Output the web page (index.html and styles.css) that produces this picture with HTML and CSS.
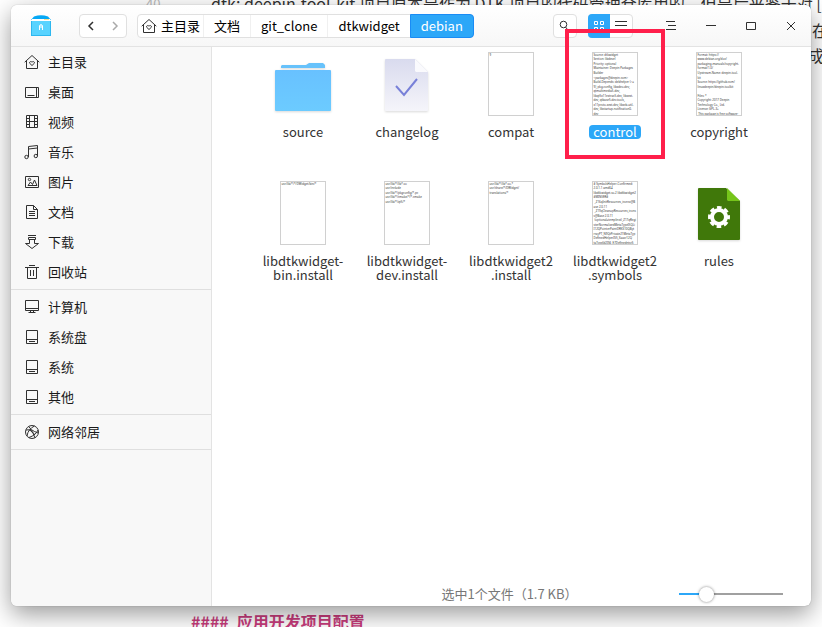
FILE: index.html
```html
<!DOCTYPE html>
<html lang="zh-CN">
<head>
<meta charset="utf-8">
<title>debian</title>
<link rel="stylesheet" href="styles.css">
</head>
<body>
<svg class="defs" aria-hidden="true">
  <symbol id="home" viewBox="0 0 16 16"><path d="M.7 8.2 8 1.500l7.300 6.700M2.500 7v7.500h11V7M8 11.500 5.700 9.300C5 8 6.700 6.800 8 8.200 9.300 6.800 11 8 10.300 9.300z"/></symbol>
  <symbol id="disk" viewBox="0 0 16 16"><path d="M2.500 1.500h11v13h-11zM2.500 10.500h11M5 12.500h6"/></symbol>
</svg>

<div class="backdrop" aria-hidden="true">
  <span class="line-number">40</span>
  <p class="doc-line first"><span class="dash">-</span>dtk: deepin-tool-kit 项目原本是作为 DTK 项目的代码管理仓库用的，但是后来鉴于对 [</p>
  <p class="doc-line second">在</p>
  <p class="doc-line third">成</p>
  <p class="doc-heading"><span>####</span> <span>应用开发项目配置</span></p>
</div>

<div class="window">
  <header class="titlebar">
    <svg class="app-icon" viewBox="0 0 20 22"><path fill="#06a8f5" d="M0 5 3 1.500Q10-1 17 1.500L20 5z"/><path fill="#fff" d="M1 4h18v4H1z"/><path fill="#ffe08a" d="M13 4h5v1h-5z"/><path fill="#58d3ff" d="M0 6h20v15H0z"/><path fill="#2db7ef" d="M0 6h1v15H0zM19 6h1v15h-1zM0 20h20v1H0z"/><path fill="none" stroke="#fff" d="M8.500 15v-4.500q1.500-2 3 0V15M10 10v3"/></svg>
    <div class="history">
      <button type="button" aria-label="后退"><svg viewBox="0 0 16 16"><path stroke-width="1.500" d="M9 4 5 8l4 4"/></svg></button>
      <button type="button" aria-label="前进" disabled><svg viewBox="0 0 16 16"><path stroke-width="1.500" d="m6 4 4 4-4 4"/></svg></button>
    </div>
    <nav class="crumbs">
      <a href="#" class="root"><svg><use href="#home"/></svg>主目录</a><a href="#">文档</a><a href="#">git_clone</a><a href="#">dtkwidget</a><a href="#" class="current">debian</a>
    </nav>
    <button type="button" class="search" aria-label="搜索"><svg viewBox="0 0 16 16"><circle cx="6.500" cy="6.500" r="3.300"/><path d="m8.500 9 2 2.500"/></svg></button>
    <div class="views">
      <button type="button" class="on" aria-label="图标视图"><svg viewBox="0 0 16 16"><path d="M3.500 3.500h3v3h-3zM9.500 3.500h3v3h-3zM3.500 9.500h3v3h-3zM9.500 9.500h3v3h-3z"/></svg></button>
      <button type="button" aria-label="列表视图"><svg viewBox="0 0 16 16"><path d="M2 3.500h12M2 7.500h12M2 11.500h12"/></svg></button>
    </div>
    <div class="controls">
      <button type="button" aria-label="菜单"><svg viewBox="0 0 16 16"><path d="M3 3.500h9M5 7.500h8M3 11.500h10"/></svg></button>
      <button type="button" aria-label="最小化"><svg viewBox="0 0 16 16"><path d="M3 7.500h10"/></svg></button>
      <button type="button" aria-label="最大化"><svg viewBox="0 0 16 16"><path d="M3.500 4.500h9v7h-9z"/></svg></button>
      <button type="button" aria-label="关闭"><svg viewBox="0 0 16 16"><path d="m4 4 8 8M12 4l-8 8"/></svg></button>
    </div>
  </header>

  <div class="main">
    <nav class="sidebar">
      <ul>
        <li><a href="#"><svg><use href="#home"/></svg>主目录</a></li>
        <li><a href="#"><svg viewBox="0 0 16 16"><path d="M1.500 3.500h13v10h-13zM12.500 3.500v10M3.500 11.500h7"/></svg>桌面</a></li>
        <li><a href="#"><svg viewBox="0 0 16 16"><path d="M2.500 1.500h11v12h-11zM5.500 1.500v12M10.500 1.500v12M5.500 7.500h5M2.500 4.500h3M2.500 7.500h3M2.500 10.500h3M10.500 4.500h3M10.500 7.500h3M10.500 10.500h3"/></svg>视频</a></li>
        <li><a href="#"><svg viewBox="0 0 16 16"><circle cx="2.500" cy="13" r="1.700"/><circle cx="11.800" cy="12" r="1.700"/><path d="M4.500 13V2.500l9-1V12M4.500 5l9-1"/></svg>音乐</a></li>
        <li><a href="#"><svg viewBox="0 0 16 16"><path d="M1.500 2.500h13v11h-13zM4 11.500 6.500 8l2 2.500L10.500 6l2.500 5.500z"/><circle cx="5.500" cy="5.500" r="1.200"/></svg>图片</a></li>
        <li><a href="#"><svg viewBox="0 0 16 16"><path d="M2.500 1.500h7l4 4v9h-11zM9.500 1.500v4h4M5 7.500h6M5 9.500h6M5 11.500h6"/></svg>文档</a></li>
        <li><a href="#"><svg viewBox="0 0 16 16"><path d="M4 1.500h8M4.500 3.500h7v2h-7zM5.500 5.500v4h-4L8 14.500l6.500-5h-4v-4z"/></svg>下载</a></li>
        <li><a href="#"><svg viewBox="0 0 16 16"><path d="M1 3.500h14M5 1.500h6M3.500 3.500v11h9v-11M6.500 6v6M9.500 6v6"/></svg>回收站</a></li>
      </ul>
      <ul>
        <li><a href="#"><svg viewBox="0 0 16 16"><path d="M1.500 1.500h13v10h-13zM1.500 9.500h13M6.500 11.500v2M9.500 11.500v2M4.500 13.500h7"/></svg>计算机</a></li>
        <li><a href="#"><svg><use href="#disk"/></svg>系统盘</a></li>
        <li><a href="#"><svg><use href="#disk"/></svg>系统</a></li>
        <li><a href="#"><svg><use href="#disk"/></svg>其他</a></li>
      </ul>
      <ul>
        <li><a href="#"><svg viewBox="0 0 16 16"><circle cx="8" cy="8" r="6.500"/><path d="M5 2.500Q6 6 14 9M10.500 2Q4 5 3 12M2 6q6-2 9 8M14 6q-2 5-9 7.500M6 5l5 6"/></svg>网络邻居</a></li>
      </ul>
    </nav>

    <section class="content">
      <ul class="files">
        <li>
          <svg class="icon" viewBox="0 0 64 64"><path fill="#67c2fb" d="M10 16v-2l1-1h24l3-2h14l2 2v3z"/><rect x="4" y="18" width="56" height="41" rx="1" fill="url(#fold)"/><defs><linearGradient id="fold" x2="0" y2="1"><stop stop-color="#68c1ff"/><stop offset="1" stop-color="#6ccbff"/></linearGradient></defs></svg>
          <span class="name">source</span>
        </li>
        <li>
          <svg class="icon" viewBox="0 0 64 64"><defs><linearGradient id="doc" x2="0" y2="1"><stop stop-color="#d9dbee"/><stop offset="1" stop-color="#f5f5fa"/></linearGradient></defs><path fill="url(#doc)" d="M11 7h29l13 13v38q0 1-1 1H11q-1 0-1-1V8q0-1 1-1z"/><path fill="#fafafd" d="M40 7v12l1 1h12z"/><path fill="none" stroke="#7880d8" stroke-width="2" d="m21 34 8 9 13-16"/></svg>
          <span class="name">changelog</span>
        </li>
        <li>
          <svg class="icon page" viewBox="0 0 135 192"><text><tspan x="1" y="9">9</tspan></text></svg>
          <span class="name">compat</span>
        </li>
        <li class="marked">
          <svg class="icon page" viewBox="0 0 135 192"><text><tspan x="1" y="9">Source: dtkwidget</tspan><tspan x="1" dy="14">Section: libdevel</tspan><tspan x="1" dy="14">Priority: optional</tspan><tspan x="1" dy="14">Maintainer: Deepin Packages</tspan><tspan x="1" dy="14">Builder</tspan><tspan x="1" dy="14">&lt;packages@deepin.com&gt;</tspan><tspan x="1" dy="14">Build-Depends: debhelper (&gt;=</tspan><tspan x="1" dy="14">9), pkg-config, libxdeo-dev,</tspan><tspan x="1" dy="14">qtmultimedia5-dev,</tspan><tspan x="1" dy="14">libqt5x11extras5-dev, libxext-</tspan><tspan x="1" dy="14">dev, qtbase5-dev-tools,</tspan><tspan x="1" dy="14">x11proto-xext-dev, libxcb-util-</tspan><tspan x="1" dy="14">dev, libstartup-notification0-</tspan><tspan x="1" dy="14">dev,</tspan></text></svg>
          <span class="name">control</span>
        </li>
        <li>
          <svg class="icon page" viewBox="0 0 135 192"><text><tspan x="1" y="9">Format: https://</tspan><tspan x="1" dy="14">www.debian.org/doc/</tspan><tspan x="1" dy="14">packaging-manuals/copyright-</tspan><tspan x="1" dy="14">format/1.0/</tspan><tspan x="1" dy="14">Upstream-Name: deepin-tool-</tspan><tspan x="1" dy="14">kit</tspan><tspan x="1" dy="14">Source: https://github.com/</tspan><tspan x="1" dy="14">linuxdeepin/deepin-toolkit</tspan><tspan x="1" dy="28">Files: *</tspan><tspan x="1" dy="14">Copyright: 2017 Deepin</tspan><tspan x="1" dy="14">Technology Co., Ltd.</tspan><tspan x="1" dy="14">License: GPL-3+</tspan><tspan x="3" dy="14">This package is free software;</tspan></text></svg>
          <span class="name">copyright</span>
        </li>
        <li>
          <svg class="icon page" viewBox="0 0 135 192"><text><tspan x="1" y="9">usr/lib/*/*/DWidget/bin/*</tspan></text></svg>
          <span class="name">libdtkwidget-<br>bin.install</span>
        </li>
        <li>
          <svg class="icon page" viewBox="0 0 135 192"><text><tspan x="1" y="9">usr/lib/*/lib*.so</tspan><tspan x="1" dy="14">usr/include</tspan><tspan x="1" dy="14">usr/lib/*/pkgconfig/*.pc</tspan><tspan x="1" dy="14">usr/lib/*/cmake/*/*.cmake</tspan><tspan x="1" dy="14">usr/lib/*/qt5/*</tspan></text></svg>
          <span class="name">libdtkwidget-<br>dev.install</span>
        </li>
        <li>
          <svg class="icon page" viewBox="0 0 135 192"><text><tspan x="1" y="9">usr/lib/*/lib*.so.*</tspan><tspan x="1" dy="14">usr/share/*/DWidget/</tspan><tspan x="1" dy="14">translations/*</tspan></text></svg>
          <span class="name">libdtkwidget2<br>.install</span>
        </li>
        <li>
          <svg class="icon page" viewBox="0 0 135 192"><text><tspan x="1" y="9"># SymbolsHelper-Confirmed:</tspan><tspan x="1" dy="14">2.0.1.1 amd64</tspan><tspan x="1" dy="14">libdtkwidget.so.2 libdtkwidget2</tspan><tspan x="1" dy="14">#MINVER#</tspan><tspan x="4" dy="14">_Z16qInitResources_iconsv@B</tspan><tspan x="1" dy="14">ase 2.0.11</tspan><tspan x="4" dy="14">_Z19qCleanupResources_icons</tspan><tspan x="1" dy="14">v@Base 2.0.11</tspan><tspan x="4" dy="14">(optional=templinst)_Z17qRegi</tspan><tspan x="1" dy="14">sterNormalizedMetaTypeI5QLi</tspan><tspan x="1" dy="14">I12QPointerPaintDRKS10QByt</tspan><tspan x="1" dy="14">rrayPT_N9QtPrivate21MetaTyp</tspan><tspan x="1" dy="14">DefinedHelperIS5_Xaasr12Q</tspan><tspan x="1" dy="14">taTypeId2IS6_E7DefinedntsrS</tspan></text></svg>
          <span class="name">libdtkwidget2<br>.symbols</span>
        </li>
        <li>
          <svg class="icon" viewBox="0 0 64 64"><path fill="#40780a" d="M12 7h27l14 13v38q0 1-1 1H12q-1 0-1-1V8q0-1 1-1z"/><path fill="#76c51a" d="M40 7v12l1 1h12z"/><g fill="none" stroke="#fff"><circle cx="32" cy="36" r="7" stroke-width="4"/><circle cx="32" cy="36" r="9.500" stroke-width="3" stroke-dasharray="4.500 2.960" stroke-dashoffset="2.250"/></g></svg>
          <span class="name">rules</span>
        </li>
      </ul>
      <footer class="status">
        <output>选中1个文件（1.7 KB）</output>
        <input type="range" min="0" max="100" value="23" aria-label="图标大小">
      </footer>
    </section>
  </div>
</div>
</body>
</html>
```
FILE: styles.css
```css
* { box-sizing: border-box; }

body {
  margin: 0;
  min-height: 100vh;
  padding: 5px 11px 21px;
  display: flex;
  position: relative;
  overflow: hidden;
  background: #fff;
  color: #1a1a1a;
  font: 13px/20px "Noto Sans CJK SC", sans-serif;
}

ul { list-style: none; margin: 0; padding: 0; }
a { color: inherit; text-decoration: none; }

button {
  display: flex;
  align-items: center;
  justify-content: center;
  padding: 0;
  border: 0;
  background: none;
  color: inherit;
}

svg { width: 16px; height: 16px; flex: none; fill: none; stroke: #303030; }
.defs { position: absolute; width: 0; height: 0; }

/* Editor text lying under the window */
.backdrop { position: absolute; inset: 0; overflow: hidden; font-size: 16px; line-height: 24px; color: #333; }
.backdrop p { margin: 0; white-space: nowrap; }
.line-number { position: absolute; left: 146px; top: -8px; font-size: 13px; color: #bbb; }
.doc-line { position: absolute; }
.dash { display: inline-block; width: 18px; }
.first { left: 193px; top: -9px; }
.second { right: -6px; top: 18px; }
.third { right: -2px; top: 43px; }
.doc-heading {
  position: absolute;
  left: 191px;
  bottom: -6px;
  display: flex;
  gap: 8px;
  font-weight: 700;
  color: #c83c7c;
}

.window {
  flex: 1;
  display: flex;
  flex-direction: column;
  position: relative;
  border-radius: 6px;
  background: #fff;
  box-shadow: 0 0 1px rgba(0, 0, 0, .4), 0 8px 24px rgba(0, 0, 0, .4);
}

.titlebar {
  display: flex;
  align-items: center;
  height: 42px;
  padding: 0 0 0 20px;
  border-bottom: 1px solid #e3e3e3;
  border-radius: 6px 6px 0 0;
  background: linear-gradient(#fff, #f7f7f7);
}
.app-icon { width: 20px; height: 22px; margin-right: 28px; stroke: none; }

.history, .crumbs, .search, .views {
  display: flex;
  height: 24px;
  border: 1px solid #e0e0e0;
  border-radius: 4px;
  background: #fff;
}
.history { width: 48px; margin-right: 10px; }
.history button { flex: 1; }
.history button:disabled svg { stroke: #aaa; }

.crumbs { font-size: 13px; line-height: 22px; color: #000; }
.crumbs a { display: flex; align-items: center; padding: 0 10px; border-right: 1px solid #f0f0f0; }
.crumbs .root { gap: 4px; padding: 0 3px; }
.crumbs .current {
  margin: -1px;
  border: 1px solid #1a8cf5;
  border-radius: 0 4px 4px 0;
  background: #2ca7f8;
  color: #fff;
}

.search { width: 24px; margin-left: auto; margin-right: 11px; }
.views button { width: 22px; }
.views .on { margin: -1px 0 -1px -1px; border-radius: 4px 0 0 4px; background: #2ca7f8; }
.views .on svg { stroke: #fff; }
.controls { display: flex; margin-left: 18px; }
.controls button { width: 40px; height: 40px; }

.main { flex: 1; display: flex; }

.sidebar {
  width: 201px;
  border-right: 1px solid #e3e3e3;
  border-radius: 0 0 0 6px;
  background: #f8f8f8;
}
.sidebar ul { padding: 2px 0; border-bottom: 1px solid #dfdfdf; }
.sidebar ul:first-child { padding-top: 0; }
.sidebar a { display: flex; align-items: center; gap: 8px; height: 30px; padding-left: 13px; }

.content { flex: 1; display: flex; flex-direction: column; }
.files {
  flex: 1;
  display: grid;
  grid-template-columns: repeat(auto-fill, 104px);
  grid-auto-rows: 129px;
  align-content: start;
  justify-content: center;
  padding: 5px 1px 0 0;
}
.files li { display: flex; flex-direction: column; align-items: center; gap: 9px; position: relative; }
.icon { width: 64px; height: 64px; stroke: none; filter: drop-shadow(0 1px 1px rgba(0, 0, 0, .15)); }
.page { width: 46px; border: 1px solid #d0d0d0; background: #fff; filter: none; }
.page text { fill: #333; font: 9px "Noto Sans", sans-serif; }
.name { padding: 0 4px; border-radius: 4px; font-size: 13px; line-height: 14px; text-align: center; color: #333; }
.marked .name { background: #2ca7f8; color: #fff; }
.marked::after { content: ""; position: absolute; inset: -23px 2px 22px; border: 4px solid #ff1f4b; }

.status {
  display: grid;
  grid-template-columns: 1fr auto 1fr;
  align-items: center;
  height: 24px;
  padding: 0 28px 0 24px;
  color: #777;
}
.status output { grid-column: 2; }
.status input {
  justify-self: end;
  width: 104px;
  height: 16px;
  margin: 0;
  appearance: none;
  background: linear-gradient(90deg, #2ca7f8 25%, #a0a0a0 25%) center / 100% 2px no-repeat;
}
.status input::-webkit-slider-thumb {
  appearance: none;
  width: 15px;
  height: 15px;
  border-radius: 50%;
  background: #fff;
  box-shadow: 0 0 3px rgba(0, 0, 0, .5);
}
```
